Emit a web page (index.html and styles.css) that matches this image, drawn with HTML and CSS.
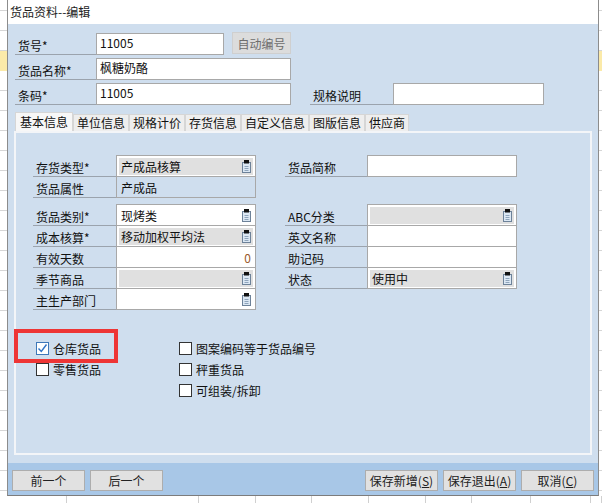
FILE: index.html
```html
<!DOCTYPE html>
<html lang="zh-CN">
<head>
    <meta charset="UTF-8">
    <title>货品资料--编辑</title>
    <link rel="stylesheet" href="styles.css">
</head>
<body>
    <svg class="defs" width="0" height="0">
        <symbol id="ico" viewBox="0 0 9 13">
            <rect x="0.5" y="2.5" width="8" height="10" fill="#dce8f4" stroke="#6d8299"/>
            <rect x="2" y="0" width="5" height="3.5" fill="#111"/>
            <path d="M2.5 6.5h4M2.5 8.5h4M2.5 10.5h4" stroke="#8ea4bb"/>
        </symbol>
    </svg>

    <div class="window">
        <div class="titlebar">货品资料--编辑</div>

        <div class="content">
            <!-- 顶部基本字段 -->
            <div class="head">
                <div class="line">
                    <div class="lbl">货号*</div>
                    <div class="inp w128">11005</div>
                    <button class="auto">自动编号</button>
                </div>
                <div class="line">
                    <div class="lbl">货品名称*</div>
                    <div class="inp w195">枫糖奶酪</div>
                </div>
                <div class="line">
                    <div class="lbl">条码*</div>
                    <div class="inp w195">11005</div>
                    <div class="lbl spec">规格说明</div>
                    <div class="inp w151"></div>
                </div>
            </div>

            <!-- 页签 -->
            <div class="tabs">
                <div class="tab active">基本信息</div>
                <div class="tab">单位信息</div>
                <div class="tab">规格计价</div>
                <div class="tab">存货信息</div>
                <div class="tab">自定义信息</div>
                <div class="tab">图版信息</div>
                <div class="tab">供应商</div>
            </div>

            <div class="panel">
                <div class="form">
                    <div class="grp left">
                        <div class="frow">
                            <div class="flbl">存货类型*</div>
                            <div class="fval"><div class="box dis">产成品核算<svg class="ico"><use href="#ico"/></svg></div></div>
                        </div>
                        <div class="frow">
                            <div class="flbl">货品属性</div>
                            <div class="fval plain"><div class="box">产成品</div></div>
                        </div>
                    </div>
                    <div class="grp right">
                        <div class="frow">
                            <div class="flbl">货品简称</div>
                            <div class="fval"><div class="box"></div></div>
                        </div>
                    </div>
                    <div class="grp left">
                        <div class="frow">
                            <div class="flbl">货品类别*</div>
                            <div class="fval"><div class="box">现烤类<svg class="ico"><use href="#ico"/></svg></div></div>
                        </div>
                        <div class="frow">
                            <div class="flbl">成本核算*</div>
                            <div class="fval"><div class="box dis">移动加权平均法<svg class="ico"><use href="#ico"/></svg></div></div>
                        </div>
                        <div class="frow">
                            <div class="flbl">有效天数</div>
                            <div class="fval"><div class="box num">0</div></div>
                        </div>
                        <div class="frow">
                            <div class="flbl">季节商品</div>
                            <div class="fval"><div class="box dis"><span></span><svg class="ico"><use href="#ico"/></svg></div></div>
                        </div>
                        <div class="frow">
                            <div class="flbl">主生产部门</div>
                            <div class="fval"><div class="box"><span></span><svg class="ico"><use href="#ico"/></svg></div></div>
                        </div>
                    </div>
                    <div class="grp right">
                        <div class="frow">
                            <div class="flbl">ABC分类</div>
                            <div class="fval"><div class="box dis"><span></span><svg class="ico"><use href="#ico"/></svg></div></div>
                        </div>
                        <div class="frow">
                            <div class="flbl">英文名称</div>
                            <div class="fval"><div class="box"></div></div>
                        </div>
                        <div class="frow">
                            <div class="flbl">助记码</div>
                            <div class="fval"><div class="box"></div></div>
                        </div>
                        <div class="frow">
                            <div class="flbl">状态</div>
                            <div class="fval"><div class="box dis">使用中<svg class="ico"><use href="#ico"/></svg></div></div>
                        </div>
                    </div>
                </div>

                <div class="checks">
                    <div class="ccol first">
                        <label class="chk"><span class="cb on"><svg width="11" height="11" viewBox="0 0 11 11"><path d="M1.5 5.5l2.8 3 5.2-7" fill="none" stroke="#2f72c4" stroke-width="1.4"/></svg></span>仓库货品</label>
                        <label class="chk"><span class="cb"></span>零售货品</label>
                    </div>
                    <div class="ccol">
                        <label class="chk"><span class="cb"></span>图案编码等于货品编号</label>
                        <label class="chk"><span class="cb"></span>秤重货品</label>
                        <label class="chk"><span class="cb"></span>可组装/拆卸</label>
                    </div>
                </div>

                <div class="mark"></div>
            </div>
        </div>

        <div class="footer">
            <button class="btn">前一个</button>
            <button class="btn">后一个</button>
            <div class="spacer"></div>
            <button class="btn">保存新增(<u>S</u>)</button>
            <button class="btn">保存退出(<u>A</u>)</button>
            <button class="btn">取消(<u>C</u>)</button>
        </div>
    </div>

    <div class="sheet">
        <div class="cell" style="width:67px"></div>
        <div class="cell" style="width:133px"></div>
        <div class="cell" style="width:57px"></div>
        <div class="cell" style="width:56px"></div>
        <div class="cell" style="width:57px"></div>
        <div class="cell" style="width:57px"></div>
        <div class="cell" style="width:46px"></div>
        <div class="cell" style="width:59px"></div>
        <div class="cell" style="width:60px"></div>
        <div class="cell" style="width:10px"></div>
    </div>
</body>
</html>
```

FILE: styles.css
```css
body {
    margin: 0;
    width: 602px;
    height: 503px;
    overflow: hidden;
    font-family: 'Noto Sans CJK SC', sans-serif;
    font-size: 12px;
    color: #111;
    background:
        linear-gradient(to bottom, transparent 51px, #fbeaa9 51px, #fbeaa9 71px, transparent 71px),
        repeating-linear-gradient(to bottom, #fff 0, #fff 10px, #d6d6d6 10px, #d6d6d6 11px, #fff 11px, #fff 20px);
}
.defs {
    position: absolute;
}
.window {
    margin-left: 7px;
    width: 592px;
    height: 496px;
    box-sizing: border-box;
    border-left: 1px solid #8c8c8c;
    border-right: 1px solid #8c8c8c;
    border-bottom: 1px solid #7c7c7c;
    background-color: #cfdeee;
    display: flex;
    flex-direction: column;
}
.titlebar {
    height: 24px;
    line-height: 24px;
    padding-left: 2px;
    background-color: #fff;
    color: #222;
}
.content {
    flex: 1;
    padding: 9px 6px 8px;
    display: flex;
    flex-direction: column;
    min-height: 0;
}
.head {
    padding-left: 1px;
}
.line {
    display: flex;
    height: 22px;
}
.line + .line {
    margin-top: 3px;
}
.lbl {
    width: 81px;
    box-sizing: border-box;
    padding-left: 3px;
    border-bottom: 1px solid #9ba3ad;
    display: flex;
    align-items: flex-end;
    line-height: 16px;
}
.lbl.spec {
    width: 83px;
    margin-left: 19px;
}
.inp {
    box-sizing: border-box;
    border: 1px solid #a8a8a8;
    background-color: #fff;
    padding-left: 3px;
    line-height: 18px;
}
.w128 { width: 128px; }
.w195 { width: 195px; }
.w151 { width: 151px; }
.auto {
    margin-left: 8px;
    margin-top: -1px;
    width: 59px;
    height: 22px;
    border: 1px solid #cfcfcf;
    background-color: #dcdcdc;
    color: #6d6d6d;
    font-family: inherit;
    font-size: 12px;
    padding: 0;
}
.tabs {
    display: flex;
    margin-top: 7px;
    margin-left: 1px;
    height: 19px;
}
.tab {
    padding: 0 3px;
    margin-top: 2px;
    background-color: #eeeeee;
    border: 1px solid #d6d6d6;
    border-bottom: none;
    line-height: 16px;
}
.tab.active {
    padding: 0 4px;
    margin-top: 0;
    background-color: #f7f7f7;
    line-height: 18px;
}
.panel {
    flex: 1;
    position: relative;
    border: 2px solid #f3f5f8;
    padding: 22px 0 0 17px;
}
.form {
    display: grid;
    grid-template-columns: 223px 232px;
    column-gap: 29px;
    row-gap: 6px;
    align-items: start;
}
.frow {
    display: flex;
    height: 21px;
}
.grp .frow:first-child {
    height: 22px;
}
.flbl {
    width: 83px;
    box-sizing: border-box;
    padding-left: 3px;
    border-bottom: 1px solid #9ba3ad;
    display: flex;
    align-items: flex-end;
    line-height: 16px;
}
.right .flbl {
    width: 82px;
}
.fval {
    flex: 1;
    box-sizing: border-box;
    border: 1px solid #a8a8a8;
    border-top: none;
    background-color: #fff;
    padding: 2px 2px 1px;
    display: flex;
}
.grp .frow:first-child .fval {
    border-top: 1px solid #a8a8a8;
}
.fval.plain {
    background-color: transparent;
}
.box {
    flex: 1;
    display: flex;
    align-items: center;
    justify-content: space-between;
    padding: 0 2px 0 2px;
    line-height: 16px;
}
.box.dis {
    background-color: #e0e0e0;
}
.box.num {
    justify-content: flex-end;
    color: #9a5a2a;
}
.ico {
    width: 9px;
    height: 13px;
    flex-shrink: 0;
}
.checks {
    display: flex;
    margin-top: 28px;
    padding-left: 3px;
}
.ccol {
    display: flex;
    flex-direction: column;
}
.ccol.first {
    width: 143px;
}
.chk {
    display: flex;
    align-items: center;
    height: 21px;
}
.cb {
    width: 13px;
    height: 13px;
    box-sizing: border-box;
    border: 1px solid #333;
    background-color: #fff;
    margin-right: 4px;
    display: flex;
    align-items: center;
    justify-content: center;
}
.cb.on {
    border-color: #3f78b8;
}
.mark {
    position: absolute;
    left: -2px;
    top: 196px;
    width: 104px;
    height: 34px;
    box-sizing: border-box;
    border: 4px solid #ee3535;
}
.footer {
    height: 32px;
    box-sizing: border-box;
    padding: 7px 4px 0;
    background-color: #a8c7e7;
    display: flex;
    align-items: flex-start;
    gap: 5px;
}
.spacer {
    flex: 1;
}
.btn {
    width: 73px;
    height: 21px;
    padding: 0;
    border: 1px solid #adadad;
    background-color: #e1e1e1;
    font-family: inherit;
    font-size: 12px;
    color: #222;
}
.btn u {
    text-underline-offset: 1px;
}
.sheet {
    display: flex;
    height: 7px;
    background-color: #fff;
}
.cell {
    border-right: 1px solid #d0d0d0;
}
```
